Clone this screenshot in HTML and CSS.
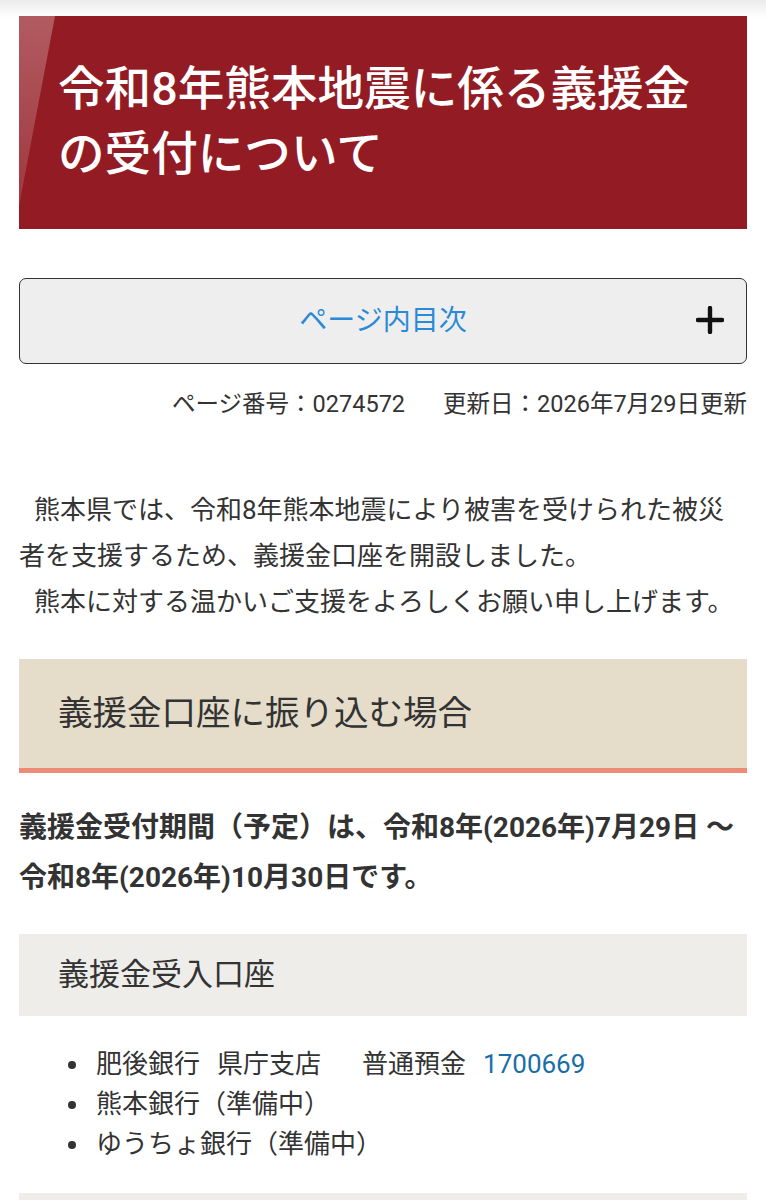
FILE: index.html
```html
<!DOCTYPE html>
<html lang="ja">
<head>
<meta charset="utf-8">
<title>令和8年熊本地震に係る義援金の受付について</title>
<link rel="stylesheet" href="styles.css">
</head>
<body>
<div class="page">
  <h1 class="title"><span class="title-text">令和8年熊本地震に係る義援金の受付について</span></h1>

  <div class="toc">
    <span class="toc-label">ページ内目次</span>
    <svg class="toc-plus" width="28" height="28" viewBox="0 0 28 28" aria-hidden="true">
      <path d="M14 2V26M2 14H26" stroke="#111" stroke-width="4.4" stroke-linecap="round" fill="none"/>
    </svg>
  </div>

  <p class="meta"><span>ページ番号：0274572</span><span>更新日：2026年7月29日更新</span></p>

  <p class="lead">熊本県では、令和8年熊本地震により被害を受けられた被災者を支援するため、義援金口座を開設しました。</p>
  <p class="lead">熊本に対する温かいご支援をよろしくお願い申し上げます。</p>

  <h2 class="section">義援金口座に振り込む場合</h2>

  <p class="period">義援金受付期間（予定）は、令和8年(2026年)7月29日 ～ 令和8年(2026年)10月30日です。</p>

  <h3 class="sub">義援金受入口座</h3>

  <ul class="banks">
    <li><span>肥後銀行</span><span class="gap-s">県庁支店</span><span class="gap-l">普通預金</span><span class="gap-s acct">1700669</span></li>
    <li>熊本銀行（準備中）</li>
    <li>ゆうちょ銀行（準備中）</li>
  </ul>

  <div class="sub next" aria-hidden="true"></div>
</div>
</body>
</html>
```

FILE: styles.css
```css
html, body {
  margin: 0;
  padding: 0;
  background: #fff;
}

body {
  font-family: Roboto, "Noto Sans CJK JP", sans-serif;
  color: #333;
}

.page {
  padding: 16px 19px 0 19px;
  background: linear-gradient(to bottom, #ebebeb 0, #f7f7f7 10px, #fff 18px);
}

.title {
  position: relative;
  margin: 0;
  background: #931c24;
  color: #fff;
  font-size: 46.6px;
  font-weight: 500;
  line-height: 65px;
  padding: 41px 30px 42px 39px;
  overflow: hidden;
}

.title::before {
  content: "";
  position: absolute;
  left: 0;
  top: 0;
  width: 36px;
  height: 190px;
  background: linear-gradient(to bottom, rgba(255,255,255,0.28), rgba(255,255,255,0.12));
  clip-path: polygon(0 0, 100% 0, 0 100%);
}

.title-text {
  position: relative;
}

.toc {
  margin-top: 49px;
  box-sizing: border-box;
  height: 86px;
  border: 1.5px solid #333;
  border-radius: 7px;
  background: #eeeeee;
  display: flex;
  align-items: center;
  justify-content: center;
  position: relative;
}

.toc-label {
  color: #2b8ad6;
  font-size: 28px;
  line-height: 34px;
}

.toc-plus {
  position: absolute;
  right: 22px;
  top: 27px;
}

.meta {
  margin: 25px 0 0;
  font-size: 23.5px;
  line-height: 30px;
  color: #333;
  display: flex;
  justify-content: flex-end;
  gap: 38px;
}

.lead {
  margin: 0;
  font-size: 26px;
  line-height: 46px;
  text-indent: 15px;
  color: #333;
}

.meta + .lead {
  margin-top: 68px;
}

.section {
  margin: 34px 0 0;
  background: #e5ddca;
  border-bottom: 5px solid #ee8b78;
  font-size: 34.5px;
  font-weight: 400;
  line-height: 40px;
  padding: 34px 39px 35px;
  color: #333;
}

.period {
  margin: 30px 0 0;
  font-size: 28px;
  font-weight: 700;
  line-height: 50px;
  color: #333;
}

.sub {
  margin: 31px 0 0;
  background: #eeedea;
  font-size: 31px;
  font-weight: 400;
  line-height: 36px;
  padding: 23px 39px;
  color: #333;
}

.banks {
  margin: 28px 0 0;
  padding: 0 0 0 77px;
  list-style: none;
  font-size: 26px;
  line-height: 40px;
  color: #333;
}

.banks li {
  position: relative;
}

.banks li::before {
  content: "";
  position: absolute;
  left: -28px;
  top: 17px;
  width: 8px;
  height: 8px;
  border-radius: 50%;
  background: #333;
}

.gap-s {
  margin-left: 17px;
}

.gap-l {
  margin-left: 41px;
}

.acct {
  color: #1a6ea8;
}

.sub.next {
  margin-top: 29px;
  height: 36px;
}
```
